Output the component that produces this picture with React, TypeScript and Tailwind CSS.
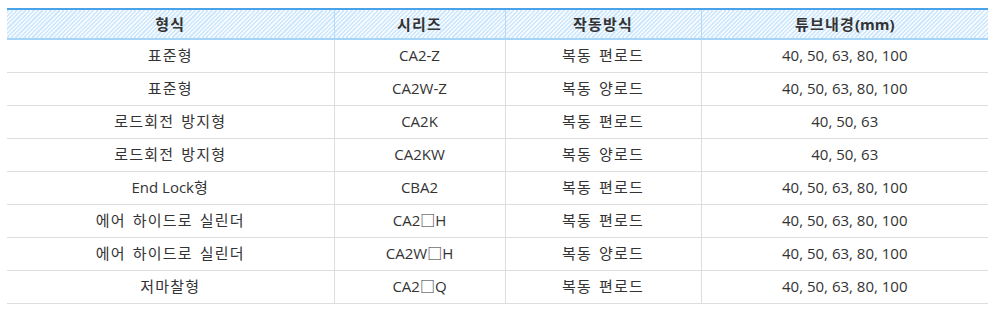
import React from 'react';

const rows = [
  ['표준형', 'CA2-Z', '복동 편로드', '40, 50, 63, 80, 100'],
  ['표준형', 'CA2W-Z', '복동 양로드', '40, 50, 63, 80, 100'],
  ['로드회전 방지형', 'CA2K', '복동 편로드', '40, 50, 63'],
  ['로드회전 방지형', 'CA2KW', '복동 양로드', '40, 50, 63'],
  ['End Lock형', 'CBA2', '복동 편로드', '40, 50, 63, 80, 100'],
  ['에어 하이드로 실린더', 'CA2□H', '복동 편로드', '40, 50, 63, 80, 100'],
  ['에어 하이드로 실린더', 'CA2W□H', '복동 양로드', '40, 50, 63, 80, 100'],
  ['저마찰형', 'CA2□Q', '복동 편로드', '40, 50, 63, 80, 100'],
];

const headers = ['형식', '시리즈', '작동방식', '튜브내경(mm)'];
const widths = ['w-[327px]', 'w-[171px]', 'w-[196px]', 'w-[287px]'];

// hangul runs get a little extra tracking so they sit as wide as the original font
function Txt({ s }: { s: string }) {
  const parts = s.split(/([가-힣]+(?:\s+[가-힣]+)*)/);
  return (
    <>
      {parts.map((p, i) =>
        /[가-힣]/.test(p) ? (
          <span key={i} className="tracking-[1.2px] [word-spacing:2px]">
            {p}
          </span>
        ) : (
          <span key={i}>{p}</span>
        )
      )}
    </>
  );
}

export default function App() {
  return (
    <div className="w-[1000px] h-[315px] bg-white pt-2 pl-[7px] font-['Open_Sans','Noto_Sans_CJK_KR',sans-serif] text-[15px] text-[#333]">
      <table className="w-[981px] table-fixed border-collapse">
        <thead>
          <tr className="h-[30px] border-t-2 border-t-[#4aa3e8] border-b-2 border-b-[#a5d4f6] bg-[repeating-linear-gradient(135deg,#d0e8fb_0px,#d0e8fb_1.5px,#f4faff_1.5px,#f4faff_3px)]">
            {headers.map((h, i) => (
              <th
                key={h}
                className={`${widths[i]} p-0 text-center font-bold leading-none text-[#333] ${i > 0 ? 'border-l border-l-[#b3dbf7]' : ''}`}
              >
                <Txt s={h} />
              </th>
            ))}
          </tr>
        </thead>
        <tbody>
          {rows.map((r, ri) => (
            <tr key={ri} className="h-[33px] border-b border-b-[#dedede]">
              {r.map((c, ci) => (
                <td
                  key={ci}
                  className={`p-0 text-center leading-none ${ci > 0 ? 'border-l border-l-[#dedede]' : ''}`}
                >
                  <Txt s={c} />
                </td>
              ))}
            </tr>
          ))}
        </tbody>
      </table>
    </div>
  );
}
